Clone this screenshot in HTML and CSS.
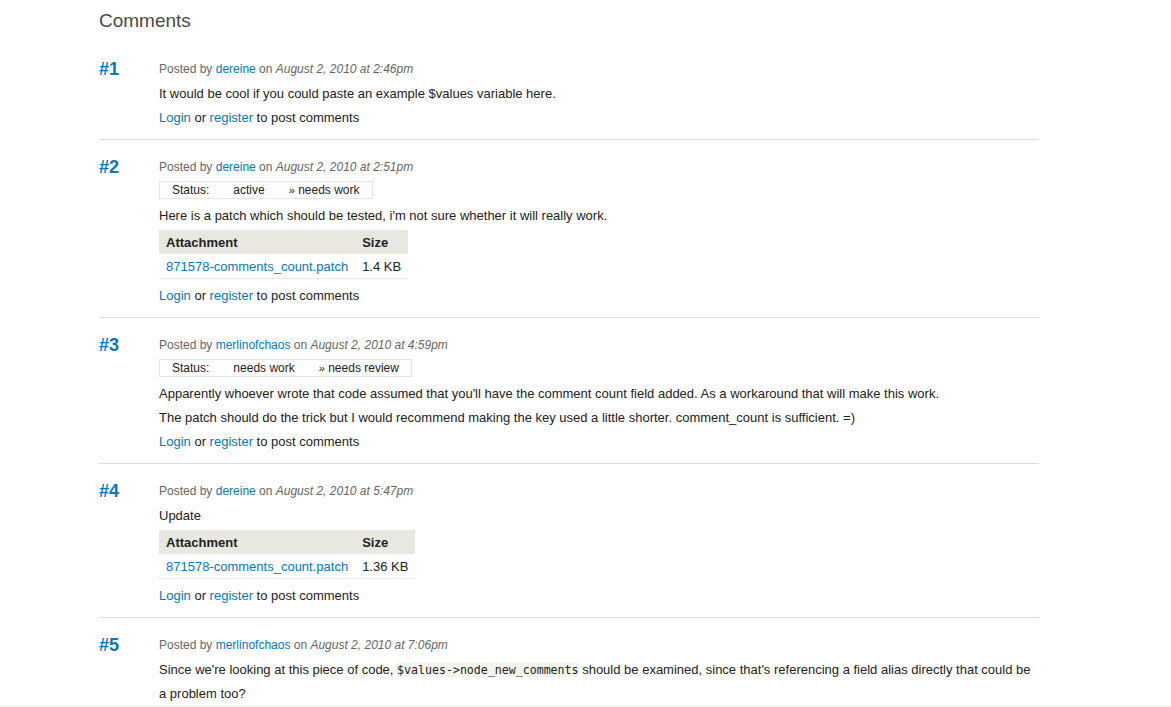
FILE: index.html
```html
<!DOCTYPE html>
<html>
<head>
<meta charset="utf-8">
<link rel="stylesheet" href="styles.css">
</head>
<body>
<div class="page">
  <h2 class="title">Comments</h2>

  <div class="comment first">
    <div class="num"><a href="#">#1</a></div>
    <div class="body">
      <div class="meta">Posted by <a href="#">dereine</a> on <em>August 2, 2010 at 2:46pm</em></div>
      <p>It would be cool if you could paste an example $values variable here.</p>
      <p class="links"><a href="#">Login</a> or <a href="#">register</a> to post comments</p>
    </div>
  </div>

  <div class="comment">
    <div class="num"><a href="#">#2</a></div>
    <div class="body">
      <div class="meta">Posted by <a href="#">dereine</a> on <em>August 2, 2010 at 2:51pm</em></div>
      <table class="status">
        <tr><td class="lbl">Status:</td><td>active</td><td><span class="raquo">»</span> needs work</td></tr>
      </table>
      <p>Here is a patch which should be tested, i'm not sure whether it will really work.</p>
      <table class="files">
        <thead><tr><th>Attachment</th><th>Size</th></tr></thead>
        <tbody><tr><td><a href="#">871578-comments_count.patch</a></td><td>1.4 KB</td></tr></tbody>
      </table>
      <p class="links"><a href="#">Login</a> or <a href="#">register</a> to post comments</p>
    </div>
  </div>

  <div class="comment">
    <div class="num"><a href="#">#3</a></div>
    <div class="body">
      <div class="meta">Posted by <a href="#">merlinofchaos</a> on <em>August 2, 2010 at 4:59pm</em></div>
      <table class="status">
        <tr><td class="lbl">Status:</td><td>needs work</td><td><span class="raquo">»</span> needs review</td></tr>
      </table>
      <p>Apparently whoever wrote that code assumed that you'll have the comment count field added. As a workaround that will make this work.</p>
      <p>The patch should do the trick but I would recommend making the key used a little shorter. comment_count is sufficient. =)</p>
      <p class="links"><a href="#">Login</a> or <a href="#">register</a> to post comments</p>
    </div>
  </div>

  <div class="comment">
    <div class="num"><a href="#">#4</a></div>
    <div class="body">
      <div class="meta">Posted by <a href="#">dereine</a> on <em>August 2, 2010 at 5:47pm</em></div>
      <p>Update</p>
      <table class="files">
        <thead><tr><th>Attachment</th><th>Size</th></tr></thead>
        <tbody><tr><td><a href="#">871578-comments_count.patch</a></td><td>1.36 KB</td></tr></tbody>
      </table>
      <p class="links"><a href="#">Login</a> or <a href="#">register</a> to post comments</p>
    </div>
  </div>

  <div class="comment last">
    <div class="num"><a href="#">#5</a></div>
    <div class="body">
      <div class="meta">Posted by <a href="#">merlinofchaos</a> on <em>August 2, 2010 at 7:06pm</em></div>
      <p>Since we're looking at this piece of code, <code>$values-&gt;node_new_comments</code> should be examined, since that's referencing a field alias directly that could be a problem too?</p>
    </div>
  </div>
</div>
<div class="footer"></div>
</body>
</html>
```
FILE: styles.css
```css
html, body {
  margin: 0;
  padding: 0;
  background: #fff;
}
body {
  font-family: "Liberation Sans", Arial, sans-serif;
  font-size: 13px;
  color: #222;
}
a {
  color: #0678be;
  text-decoration: none;
}
.page {
  margin-left: 99px;
  width: 940px;
  padding-top: 10px;
}
.title {
  font-size: 19px;
  font-weight: normal;
  color: #494949;
  margin: 0;
  line-height: 22px;
}
.comment {
  display: grid;
  grid-template-columns: 60px 1fr;
  padding: 18px 0 9px;
  border-bottom: 1px solid #dedede;
}
.comment.first {
  padding-top: 28px;
}
.comment.last {
  border-bottom: none;
  padding-bottom: 0;
}
.num {
  font-size: 18px;
  font-weight: bold;
  line-height: 18px;
}
.meta {
  font-size: 12px;
  color: #666;
  line-height: 18px;
  margin-bottom: 4px;
}
.body p {
  margin: 0;
  line-height: 24px;
}
.status {
  border-collapse: collapse;
  border: 1px solid #e6e6e6;
  font-size: 12px;
  margin: 5px 0 5px;
}
.status td {
  padding: 0 12px;
  height: 16px;
  line-height: 16px;
}
.status td.lbl {
  padding-left: 12px;
}
.raquo {
  font-size: 11px;
}
.files {
  border-collapse: collapse;
  margin: 2px 0 5px;
}
.files th {
  background: #e8e7e0;
  text-align: left;
  font-weight: bold;
  padding: 0 7px;
  height: 24px;
  color: #222;
}
.files td {
  padding: 0 7px;
  height: 24px;
  border-bottom: 1px solid #e9e9e9;
}
code {
  font-family: "DejaVu Sans Mono", monospace;
  font-size: 11.6px;
  background: #f4f4ef;
}
.footer {
  border-top: 2px solid #eeeadb;
  height: 20px;
}
```
